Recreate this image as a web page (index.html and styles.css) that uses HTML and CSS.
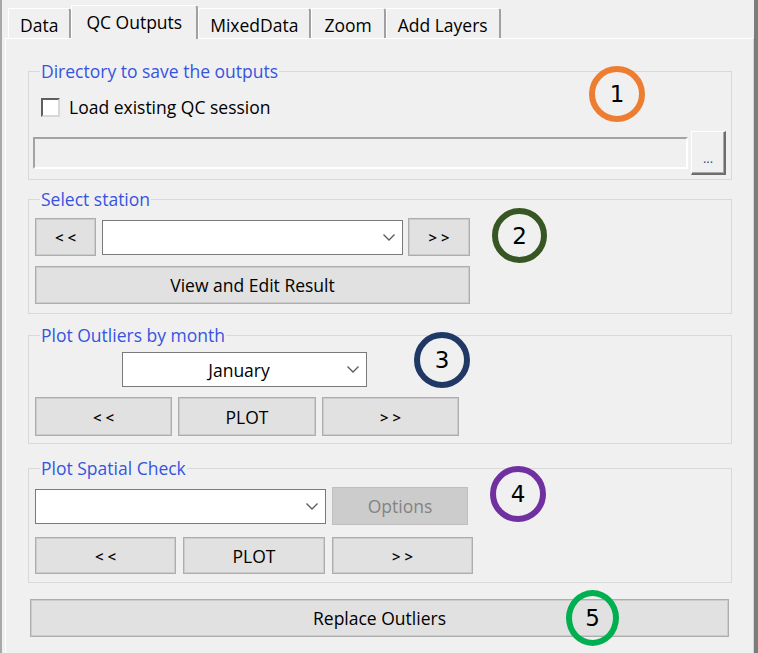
FILE: index.html
```html
<!DOCTYPE html>
<html lang="en">
<head>
<meta charset="utf-8">
<title>QC Outputs</title>
<link rel="stylesheet" href="styles.css">
</head>
<body>
<div class="window">
  <div class="tabstrip">
    <div class="tab">Data</div>
    <div class="tab active">QC Outputs</div>
    <div class="tab">MixedData</div>
    <div class="tab tab-wide">Zoom</div>
    <div class="tab">Add Layers</div>
  </div>
  <div class="page">
    <fieldset class="group g1">
      <legend>Directory to save the outputs</legend>
      <label class="check-row"><span class="check"></span><span>Load existing QC session</span></label>
      <div class="dir-row">
        <div class="pathbox"></div>
        <button class="browse">...</button>
      </div>
    </fieldset>

    <fieldset class="group g2">
      <legend>Select station</legend>
      <div class="row r-station">
        <button class="btn nav w61">&lt;&lt;</button>
        <div class="combo w301"><span class="combo-text"></span><svg class="chev" width="12" height="7" viewBox="0 0 12 7"><polyline points="0.5,0.5 6,6 11.5,0.5" fill="none" stroke="#5a5a5a" stroke-width="1.3"/></svg></div>
        <button class="btn nav w62">&gt;&gt;</button>
      </div>
      <div class="row r-gap10">
        <button class="btn w435">View and Edit Result</button>
      </div>
    </fieldset>

    <fieldset class="group g3">
      <legend>Plot Outliers by month</legend>
      <div class="row">
        <div class="combo month"><span class="combo-text center">January</span><svg class="chev" width="12" height="7" viewBox="0 0 12 7"><polyline points="0.5,0.5 6,6 11.5,0.5" fill="none" stroke="#5a5a5a" stroke-width="1.3"/></svg></div>
      </div>
      <div class="row r-gap10 trio">
        <button class="btn nav w137">&lt;&lt;</button>
        <button class="btn w138">PLOT</button>
        <button class="btn nav w137">&gt;&gt;</button>
      </div>
    </fieldset>

    <fieldset class="group g4">
      <legend>Plot Spatial Check</legend>
      <div class="row r-spatial">
        <div class="combo w291"><span class="combo-text"></span><svg class="chev" width="12" height="7" viewBox="0 0 12 7"><polyline points="0.5,0.5 6,6 11.5,0.5" fill="none" stroke="#5a5a5a" stroke-width="1.3"/></svg></div>
        <button class="btn disabled w136">Options</button>
      </div>
      <div class="row r-gap12 trio2">
        <button class="btn nav w141">&lt;&lt;</button>
        <button class="btn w142">PLOT</button>
        <button class="btn nav w141">&gt;&gt;</button>
      </div>
    </fieldset>

    <button class="btn replace">Replace Outliers</button>

    <div class="marker m1">1</div>
    <div class="marker m2">2</div>
    <div class="marker m3">3</div>
    <div class="marker m4">4</div>
    <div class="marker m5">5</div>
  </div>
</div>
</body>
</html>
```

FILE: styles.css
```css
* { box-sizing: border-box; }
html, body { margin: 0; padding: 0; }
body {
  width: 758px;
  height: 653px;
  overflow: hidden;
  background: #f0f0f0;
  font-family: "Open Sans", "Noto Sans", sans-serif;
  font-size: 17.5px;
  color: #000;
}

.window {
  display: flex;
  flex-direction: column;
  height: 653px;
  border-left: 2px solid #a8a8a8;
  border-right: 4px solid #7c7c7c;
}

/* tabs */
.tabstrip {
  flex: none;
  height: 38px;
  display: flex;
  align-items: flex-end;
  padding-left: 6px;
  position: relative;
  z-index: 2;
}
.tab {
  height: 30px;
  padding: 4px 11px 0 11px;
  border-left: 1px solid #fff;
  border-top: 1px solid #fff;
  border-right: 2px solid #a0a0a0;
  border-top-right-radius: 3px;
  line-height: 24px;
  white-space: nowrap;
  background: #f0f0f0;
}
.tab.active {
  height: 34px;
  margin-bottom: -1px;
  padding: 4px 14px 0 14px;
}
.tab.tab-wide {
  padding: 4px 12px 0 12px;
}

/* page */
.page {
  flex: 1;
  position: relative;
  margin-left: 3px;
  border-top: 1px solid #fff;
  border-left: 1px solid #fff;
  border-right: 1px solid #d4d4d4;
}

.group {
  margin: 0 21px 0 22px;
  border: 1px solid #d9d9d9;
  min-width: 0;
}
.group legend {
  margin-left: 5px;
  padding: 0 1px;
  line-height: 20px;
  color: #3654e0;
}
.g1 { margin-top: 22px; padding: 14px 5px 4px 4px; }
.g1 legend { margin-left: 7px; }
.g2 { margin-top: 9px; padding: 9px 0 9px 6px; }
.g3 { margin-top: 11px; padding: 7px 0 7px 6px; }
.g4 { margin-top: 14px; padding: 9px 0 8px 6px; }

.check-row {
  display: flex;
  align-items: center;
  gap: 9px;
  height: 24px;
  margin-left: 8px;
}
.check {
  width: 19px;
  height: 19px;
  background: #fff;
  border-style: solid;
  border-width: 2px;
  border-color: #5f5f5f #d8d8d8 #d8d8d8 #5f5f5f;
}

.dir-row {
  display: flex;
  align-items: center;
  gap: 3px;
  height: 44px;
  margin-top: 12px;
}
.pathbox {
  flex: 1;
  height: 32px;
  border-style: solid;
  border-width: 2px;
  border-color: #a3a3a3 #fff #fff #a3a3a3;
  background: #f0f0f0;
}
.browse {
  width: 35px;
  height: 44px;
  padding: 10px 0 0 0;
  font-family: "Open Sans", sans-serif;
  font-size: 13px;
  color: #3a4a78;
  background: #f0f0f0;
  border-style: solid;
  border-width: 1px 2px 2px 1px;
  border-color: #fff #6e6e6e #6e6e6e #fff;
  box-shadow: inset -1px -1px 0 #a8a8a8;
}

.row {
  display: flex;
  align-items: center;
}
.r-station { height: 38px; gap: 6px; }
.r-station .combo { margin-right: -1px; }
.r-gap10 { margin-top: 10px; }
.r-gap12 { margin-top: 12px; }
.trio { gap: 6px; }
.trio2 { gap: 7px; }
.r-spatial { height: 38px; gap: 6px; }

.btn {
  height: 38px;
  padding: 0;
  font-family: "Open Sans", "Noto Sans", sans-serif;
  font-size: 17.5px;
  color: #000;
  background: #e1e1e1;
  border: 1px solid #adadad;
  box-shadow: inset 0 0 0 1px #cccccc;
}
.btn.nav {
  font-size: 15px;
  font-weight: 600;
  letter-spacing: 4px;
  padding-left: 4px;
}
.btn.disabled {
  background: #cccccc;
  color: #838383;
  border-color: #bfbfbf;
  box-shadow: none;
}
.trio .btn { height: 39px; }
.trio2 .btn { height: 37px; }

.w61 { width: 61px; }
.w62 { width: 62px; }
.w301 { width: 301px; }
.w435 { width: 435px; }
.w137 { width: 137px; }
.w138 { width: 138px; }
.w141 { width: 141px; }
.w142 { width: 142px; }
.w291 { width: 291px; }
.w136 { width: 136px; }

.combo {
  display: flex;
  align-items: center;
  height: 35px;
  background: #fff;
  border: 1px solid #7a7a7a;
  padding-right: 7px;
}
.combo-text { flex: 1; }
.combo-text.center { text-align: center; padding-left: 8px; }
.combo.month { width: 245px; margin-left: 87px; }
.chev { flex: none; }

.replace {
  display: block;
  margin: 16px 0 0 24px;
  width: 699px;
  height: 38px;
}

/* annotation markers */
.marker {
  position: absolute;
  width: 56px;
  height: 56px;
  border: 6px solid;
  border-radius: 50%;
  display: flex;
  align-items: center;
  justify-content: center;
  font-family: "DejaVu Sans", sans-serif;
  font-size: 23px;
  color: #000;
}
.m1 { left: 583px; top: 27px; border-color: #ed7d31; }
.m2 { left: 486px; top: 169px; width: 55px; height: 55px; border-color: #375623; }
.m3 { left: 408px; top: 293px; border-color: #203864; }
.m4 { left: 484px; top: 427px; border-color: #7030a0; }
.m5 { left: 560px; top: 551px; width: 53px; border-color: #00b050; }
```
